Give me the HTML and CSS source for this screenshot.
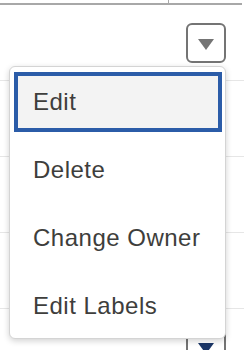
FILE: index.html
```html
<!DOCTYPE html>
<html>
<head>
    <title>Row Actions</title>
    <link rel="stylesheet" href="styles.css">
</head>
<body>
    <div class="table">
        <div class="head">
            <div class="head-cell"></div>
            <div class="head-cell"></div>
        </div>
        <div class="row">
            <button class="menu-trigger">
                <svg width="16" height="12" viewBox="0 0 16 12"><path d="M0 0 H16 L8 11 Z" fill="#747474"/></svg>
            </button>
        </div>
        <div class="row"></div>
        <div class="row"></div>
        <div class="row"></div>
        <div class="row">
            <button class="menu-trigger active">
                <svg width="16" height="12" viewBox="0 0 16 12"><path d="M0 0 H16 L8 11 Z" fill="#1b3667"/></svg>
            </button>
        </div>
    </div>

    <ul class="menu">
        <li class="menu-item focused">Edit</li>
        <li class="menu-item">Delete</li>
        <li class="menu-item">Change Owner</li>
        <li class="menu-item">Edit Labels</li>
    </ul>
</body>
</html>
```

FILE: styles.css
```css
html, body {
    height: 350px;
    overflow: hidden;
}

body {
    margin: 0;
    font-family: "Liberation Sans", Arial, sans-serif;
    background: white;
}

.table {
    width: 244px;
}

.head {
    display: flex;
    width: 242px;
    height: 3px;
    border-bottom: 2px solid #a8a8a8;
}

.head-cell {
    width: 168px;
    border-right: 1px solid #a8a8a8;
}

.head-cell + .head-cell {
    flex: 1;
    border-right: none;
}

.row {
    height: 75px;
    border-bottom: 1px solid #e6e6e6;
    display: flex;
    align-items: center;
    justify-content: flex-end;
    padding-right: 18px;
}

.menu-trigger {
    width: 40px;
    height: 40px;
    border: 2px solid #747474;
    border-radius: 6px;
    background: white;
    padding: 4px 0 0;
    display: flex;
    align-items: center;
    justify-content: center;
}

.menu {
    position: absolute;
    left: 9px;
    top: 66px;
    width: 215px;
    margin: 0;
    padding: 5px 0 2px;
    list-style: none;
    background: white;
    border: 1px solid #d4d4d4;
    border-radius: 6px;
    box-shadow: 0 2px 6px rgba(0, 0, 0, 0.18);
    display: flex;
    flex-direction: column;
    gap: 8px;
}

.menu-item {
    box-sizing: border-box;
    height: 60px;
    width: 208px;
    margin-left: 4px;
    border: 4px solid transparent;
    padding-left: 15px;
    display: flex;
    align-items: center;
    font-size: 24px;
    letter-spacing: 0.5px;
    color: #3e3e3c;
}

.menu-item.focused {
    border-color: #2b5ca8;
    background: #f3f3f3;
}
```
